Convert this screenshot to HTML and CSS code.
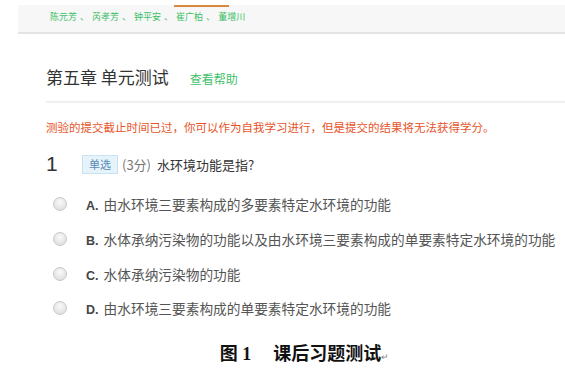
FILE: index.html
```html
<!DOCTYPE html>
<html lang="zh-CN">
<head>
    <meta charset="UTF-8">
    <title>第五章 单元测试</title>
    <link rel="stylesheet" href="styles.css">
</head>
<body>
    <div class="authors">
        <span>陈元芳</span><i>、</i><span>芮孝芳</span><i>、</i><span>钟平安</span><i>、</i><span class="current">崔广柏</span><i>、</i><span>董增川</span>
    </div>
    <div class="content">
        <div class="head">
            <span class="title">第五章 单元测试</span>
            <span class="help">查看帮助</span>
        </div>
        <p class="notice">测验的提交截止时间已过，你可以作为自我学习进行，但是提交的结果将无法获得学分。</p>
        <div class="question">
            <span class="num">1</span>
            <span class="badge">单选</span>
            <span class="score">(3分)</span>
            <span class="stem">水环境功能是指?</span>
        </div>
        <ul class="options">
            <li><span class="radio"></span><span class="text"><b>A.</b> 由水环境三要素构成的多要素特定水环境的功能</span></li>
            <li><span class="radio"></span><span class="text"><b>B.</b> 水体承纳污染物的功能以及由水环境三要素构成的单要素特定水环境的功能</span></li>
            <li><span class="radio"></span><span class="text"><b>C.</b> 水体承纳污染物的功能</span></li>
            <li><span class="radio"></span><span class="text"><b>D.</b> 由水环境三要素构成的单要素特定水环境的功能</span></li>
        </ul>
    </div>
    <div class="caption">图 1<span class="gap"></span>课后习题测试<span class="mark">↵</span></div>
</body>
</html>
```

FILE: styles.css
```css
body {
    margin: 0;
    background-color: #fff;
    font-family: "Noto Sans CJK SC", "Liberation Sans", sans-serif;
    color: #333;
}

.authors {
    margin: 5px 0 0 18px;
    height: 27px;
    padding-left: 32px;
    background-color: #f7f7f7;
    border-bottom: 2px solid #e4e4e4;
    font-size: 9px;
    line-height: 23px;
    color: #3fbf6a;
}

.authors i {
    font-style: normal;
    margin: 0 3px;
}

.authors .current {
    position: relative;
}

.authors .current::before {
    content: "";
    position: absolute;
    left: -2px;
    top: -5px;
    width: 55px;
    height: 2px;
    background-color: #d9893e;
}

.content {
    margin-left: 46px;
}

.head {
    display: flex;
    align-items: baseline;
    gap: 21px;
    padding-top: 30px;
    padding-bottom: 12px;
    border-bottom: 2px solid #f0f0f0;
}

.title {
    font-size: 17px;
    color: #333;
}

.help {
    font-size: 12px;
    color: #3fbf6a;
}

.notice {
    margin: 16px 0 0;
    font-size: 11.5px;
    color: #e8542a;
}

.question {
    display: flex;
    align-items: center;
    margin-top: 17px;
    font-size: 13px;
    color: #555;
}

.num {
    font-family: "Liberation Sans", sans-serif;
    font-size: 21px;
    color: #333;
    width: 36px;
}

.badge {
    background-color: #e6f3fb;
    border: 1px solid #c9e3f3;
    color: #5a8bb5;
    font-size: 11px;
    line-height: 15px;
    padding: 1px 6px;
}

.score {
    margin-left: 4px;
    color: #777;
}

.stem {
    margin-left: 6px;
    color: #333;
}

.options {
    list-style: none;
    margin: 11px 0 0;
    padding: 0;
}

.options li {
    display: flex;
    align-items: center;
    height: 34.7px;
    font-size: 13.7px;
    color: #555;
}

.options b {
    font-family: "Liberation Sans", sans-serif;
    font-size: 12.5px;
    color: #444;
    margin-right: 2px;
}

.radio {
    width: 12px;
    height: 12px;
    border-radius: 50%;
    border: 1px solid #c8c8c8;
    background: radial-gradient(circle at 50% 35%, #fafafa, #d8d8d8);
    margin-left: 7px;
    margin-right: 19px;
}

.caption {
    text-align: center;
    margin-top: 13px;
    padding-left: 44px;
    font-family: "Liberation Serif", "Noto Sans CJK SC", serif;
    font-weight: bold;
    font-size: 18px;
    color: #111;
}

.caption .gap {
    display: inline-block;
    width: 22px;
}

.mark {
    font-weight: normal;
    font-size: 9px;
    color: #888;
}
```
